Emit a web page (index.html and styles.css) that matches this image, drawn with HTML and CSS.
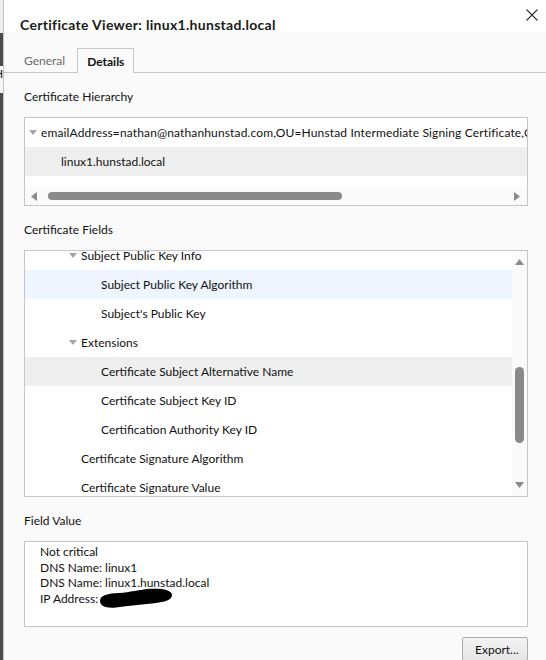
FILE: index.html
```html
<!DOCTYPE html>
<html>
<head>
<meta charset="utf-8">
<link rel="stylesheet" href="styles.css">
</head>
<body>
<div class="screen">
  <div class="behind">
    <div class="behind-top"></div>
    <div class="behind-patch"><span>H</span><span>k</span></div>
  </div>
  <div class="dialog">
    <div class="titlebar">
      <div class="title">Certificate Viewer: linux1.hunstad.local</div>
      <div class="close">
        <svg width="12" height="12" viewBox="0 0 12 12"><path d="M0.5 0.5 L11.5 11.5 M11.5 0.5 L0.5 11.5" stroke="#333" stroke-width="1.1" fill="none"/></svg>
      </div>
    </div>
    <div class="tabs">
      <div class="tab">General</div>
      <div class="tab active">Details</div>
    </div>
    <div class="content">
      <div class="label">Certificate Hierarchy</div>
      <div class="box hier">
        <div class="hier-tree">
          <div class="row l0"><span class="twisty"><svg width="8" height="5" viewBox="0 0 8 5"><polygon points="0,0 8,0 4,5" fill="#a6a6a6"/></svg></span><span class="txt wide">emailAddress=nathan@nathanhunstad.com,OU=Hunstad Intermediate Signing Certificate,O=Hunstad,L=Minneapolis,ST=Minnesota,C=US</span></div>
          <div class="row l1 selected"><span class="twisty"></span><span class="txt">linux1.hunstad.local</span></div>
        </div>
        <div class="hscroll">
          <svg class="harrow left" width="6" height="9" viewBox="0 0 6 9"><polygon points="6,0 6,9 0,4.5" fill="#8a8a8a"/></svg>
          <div class="hthumb"></div>
          <div class="spacer"></div>
          <svg class="harrow right" width="6" height="9" viewBox="0 0 6 9"><polygon points="0,0 0,9 6,4.5" fill="#8a8a8a"/></svg>
        </div>
      </div>

      <div class="label">Certificate Fields</div>
      <div class="box fields">
        <div class="viewport">
          <div class="list">
            <div class="row l2"><span class="twisty"><svg width="8" height="5" viewBox="0 0 8 5"><polygon points="0,0 8,0 4,5" fill="#a6a6a6"/></svg></span><span class="txt">Subject Public Key Info</span></div>
            <div class="row l3 hover"><span class="twisty"></span><span class="txt">Subject Public Key Algorithm</span></div>
            <div class="row l3"><span class="twisty"></span><span class="txt">Subject's Public Key</span></div>
            <div class="row l2"><span class="twisty"><svg width="8" height="5" viewBox="0 0 8 5"><polygon points="0,0 8,0 4,5" fill="#a6a6a6"/></svg></span><span class="txt">Extensions</span></div>
            <div class="row l3 selected"><span class="twisty"></span><span class="txt">Certificate Subject Alternative Name</span></div>
            <div class="row l3"><span class="twisty"></span><span class="txt">Certificate Subject Key ID</span></div>
            <div class="row l3"><span class="twisty"></span><span class="txt">Certification Authority Key ID</span></div>
            <div class="row l2"><span class="twisty"></span><span class="txt">Certificate Signature Algorithm</span></div>
            <div class="row l2"><span class="twisty"></span><span class="txt">Certificate Signature Value</span></div>
          </div>
        </div>
        <div class="vscroll">
          <svg class="varrow up" width="9" height="6" viewBox="0 0 9 6"><polygon points="0,6 9,6 4.5,0" fill="#8a8a8a"/></svg>
          <div class="vthumb"></div>
          <div class="spacer"></div>
          <svg class="varrow down" width="9" height="6" viewBox="0 0 9 6"><polygon points="0,0 9,0 4.5,6" fill="#8a8a8a"/></svg>
        </div>
      </div>

      <div class="label">Field Value</div>
      <div class="box value">
        <div class="vline">Not critical</div>
        <div class="vline">DNS Name: linux1</div>
        <div class="vline">DNS Name: linux1.hunstad.local</div>
        <div class="vline">IP Address:<svg class="redact" width="74" height="20" viewBox="0 0 74 20"><path d="M1,13 C1,7 9,5.5 20,5 C31,4.5 40,1.5 52,0.8 C63,0.2 73,2 73,7 C73,12 66,14 55,15.2 C42,16.5 30,17.5 17,19.5 C7,20.5 1,18 1,13 Z" fill="#000"/></svg></div>
      </div>

      <div class="actions">
        <div class="button">Export...</div>
      </div>
    </div>
  </div>
</div>
</body>
</html>
```

FILE: styles.css
```css
html, body {
  margin: 0;
  padding: 0;
}

body {
  width: 546px;
  height: 660px;
  overflow: hidden;
  background: #4c4c4c;
  font-family: Lato, "Liberation Sans", sans-serif;
  font-size: 12px;
  color: #111;
}

.screen {
  display: flex;
  height: 660px;
}

/* window behind the dialog */
.behind {
  width: 3px;
  flex: none;
  background: #4c4c4c;
  display: flex;
  flex-direction: column;
  overflow: hidden;
}

.behind-top {
  height: 33px;
  flex: none;
  background: #efefef;
}

.behind-patch {
  margin-top: 33px;
  height: 27px;
  flex: none;
  overflow: hidden;
  background: #f6f6f6;
  display: flex;
  flex-direction: column;
  font-size: 12px;
  line-height: 15px;
  color: #222;
}

.behind-patch span {
  margin-left: -6px;
}

/* dialog */
.dialog {
  flex: 1;
  min-width: 0;
  border-left: 1px solid #c4c4c4;
  background: #fafafa;
  display: flex;
  flex-direction: column;
}

.titlebar {
  height: 33px;
  flex: none;
  background: #ffffff;
  display: flex;
  justify-content: space-between;
  align-items: flex-start;
  padding: 0 8px 0 16px;
}

.title {
  margin-top: 16px;
  font-size: 14px;
  line-height: 17px;
  font-weight: 700;
  letter-spacing: 0.3px;
  color: #1a1a1a;
  white-space: nowrap;
}

.close {
  margin-top: 9px;
  width: 12px;
  height: 12px;
  display: flex;
}

.tabs {
  height: 39px;
  flex: none;
  display: flex;
  align-items: flex-end;
  gap: 2px;
  padding-left: 10px;
  border-bottom: 1px solid #c8c8c8;
}

.tab {
  height: 24px;
  line-height: 25px;
  padding: 0 10px;
  color: #6b6b6b;
}

.tab.active {
  height: 24px;
  padding: 0 9px;
  margin-bottom: -1px;
  border: 1px solid #c8c8c8;
  border-bottom: none;
  background: #fafafa;
  color: #111;
  font-weight: 700;
}

.content {
  padding: 14px 18px 0 20px;
  display: flex;
  flex-direction: column;
}

.label {
  height: 20px;
  line-height: 20px;
  margin-bottom: 10px;
}

.box {
  border: 1px solid #c6c6c6;
  background: #ffffff;
  overflow: hidden;
}

/* tree rows */
.row {
  height: 29px;
  line-height: 29px;
  display: flex;
  align-items: center;
  white-space: nowrap;
}

.row.selected {
  background: #efefef;
}

.row.hover {
  background: #eef5fe;
}

.row.l0 { padding-left: 4px; }
.row.l1 { padding-left: 24px; }
.row.l2 { padding-left: 44px; }
.row.l3 { padding-left: 64px; }

.twisty {
  width: 12px;
  flex: none;
  display: flex;
  align-items: center;
}

.txt {
  flex: none;
}

.txt.wide {
  letter-spacing: 0.14px;
}

/* hierarchy */
.hier {
  height: 87px;
  display: flex;
  flex-direction: column;
  margin-bottom: 14px;
}

.hier-tree {
  height: 69px;
  flex: none;
  overflow: hidden;
}

.hscroll {
  height: 18px;
  flex: none;
  background: #fafafa;
  display: flex;
  align-items: center;
  padding: 0 7px 0 6px;
}

.harrow {
  flex: none;
  display: block;
}

.hthumb {
  margin-left: 11px;
  width: 294px;
  height: 8px;
  border-radius: 4px;
  background: #8a8a8a;
  flex: none;
}

.spacer {
  flex: 1;
}

/* fields */
.fields {
  height: 245px;
  display: flex;
  margin-bottom: 14px;
}

.viewport {
  flex: 1;
  overflow: hidden;
}

.list {
  margin-top: -10px;
}

.vscroll {
  width: 15px;
  flex: none;
  background: #fafafa;
  display: flex;
  flex-direction: column;
  align-items: center;
  padding: 8px 0 8px;
  box-sizing: border-box;
}

.varrow {
  display: block;
  flex: none;
}

.vthumb {
  margin-top: 102px;
  width: 9px;
  height: 76px;
  border-radius: 4.5px;
  background: #8a8a8a;
  flex: none;
}

/* field value */
.value {
  height: 86px;
  padding: 2px 15px;
  box-sizing: border-box;
  line-height: 15.7px;
}

.vline {
  white-space: nowrap;
}

.redact {
  vertical-align: 0;
  margin: -8px 0 -5px 1px;
}

.actions {
  display: flex;
  justify-content: flex-end;
  margin-top: 10px;
}

.button {
  width: 66px;
  height: 24px;
  box-sizing: border-box;
  border: 1px solid #adadad;
  border-radius: 2px;
  background: linear-gradient(#f3f3f3, #e6e6e6);
  padding-left: 12px;
  line-height: 24px;
  color: #111;
}
```
